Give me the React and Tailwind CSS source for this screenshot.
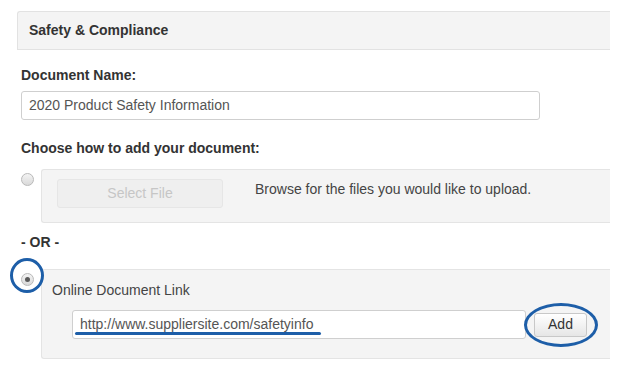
import React from 'react';

const font = { fontFamily: '"Liberation Sans", Arial, sans-serif' };

const Radio = ({ checked }) => (
  <div className="mt-[4px] flex h-[13px] w-[13px] shrink-0 items-center justify-center rounded-full border border-[#b9b9b9] bg-gradient-to-b from-[#f4f4f4] to-[#d9d9d9]">
    {checked && <div className="h-[5px] w-[5px] rounded-full bg-[#5a5a5a]" />}
  </div>
);

const Ring = ({ className }) => (
  <div className={`pointer-events-none absolute rounded-[50%] border-[3px] border-[#1d5ea8] ${className}`} />
);

export default function App() {
  return (
    <div className="min-h-screen bg-white pb-4 pt-[11px] text-[#333]" style={font}>
      {/* Panel heading */}
      <div className="ml-[17px] mr-[13px] flex h-[39px] items-center rounded-tl-[3px] border border-r-0 border-[#e2e2e2] bg-[#f4f4f4] pl-[11px] text-[14px] font-bold">
        Safety &amp; Compliance
      </div>

      <div className="pl-[21px] pr-[13px]">
        <div className="mt-[17px] text-[14px] font-bold leading-[16px]">Document Name:</div>
        <div className="mt-[8px] flex h-[29px] w-[519px] items-center rounded-[3px] border border-[#cfcfcf] bg-white pl-[7px] text-[14px] text-[#555]">
          2020 Product Safety Information
        </div>

        <div className="mt-[20px] text-[14px] font-bold leading-[16px]">Choose how to add your document:</div>

        {/* Upload option */}
        <div className="mt-[13px] flex">
          <Radio />
          <div className="ml-[7px] flex h-[54px] flex-1 items-start rounded-l-[3px] border border-r-0 border-[#e4e4e4] bg-[#f4f4f4] pl-[15px] pt-[9px]">
            <div className="flex h-[29px] w-[166px] items-center justify-center rounded-[3px] border border-[#e6e6e6] bg-[#efefef] text-[14px] text-[#c6c6c6]">
              Select File
            </div>
            <div className="ml-[32px] mt-[2px] text-[14px] leading-[16px] text-[#444]">
              Browse for the files you would like to upload.
            </div>
          </div>
        </div>

        <div className="mt-[11px] text-[14px] font-bold leading-[16px]">- OR -</div>

        {/* Link option */}
        <div className="mt-[19px] flex">
          <div className="relative">
            <Radio checked />
            <Ring className="-left-[11px] -top-[11px] h-[35px] w-[34px]" />
          </div>
          <div className="ml-[7px] h-[90px] flex-1 rounded-l-[3px] border border-r-0 border-[#e4e4e4] bg-[#f4f4f4] pl-[10px] pt-[12px]">
            <div className="text-[14px] leading-[16px] text-[#444]">Online Document Link</div>
            <div className="mt-[12px] ml-[20px] flex items-center">
              <div className="relative flex h-[29px] w-[454px] items-center rounded-[3px] border border-[#cfcfcf] bg-white pl-[7px] text-[14px] text-[#555]">
                http://www.suppliersite.com/safetyinfo
                <div className="absolute left-[2px] top-[21px] h-[3px] w-[246px] rounded-full bg-[#1d5ea8]" />
              </div>
              <div className="relative ml-[8px]">
                <div className="flex h-[24px] w-[53px] items-center justify-center rounded-[3px] border border-[#c8c8c8] bg-gradient-to-b from-white to-[#e6e6e6] text-[14px] text-[#333]">
                  Add
                </div>
                <Ring className="-left-[10px] -top-[10px] h-[44px] w-[74px]" />
              </div>
            </div>
          </div>
        </div>
      </div>
    </div>
  );
}
